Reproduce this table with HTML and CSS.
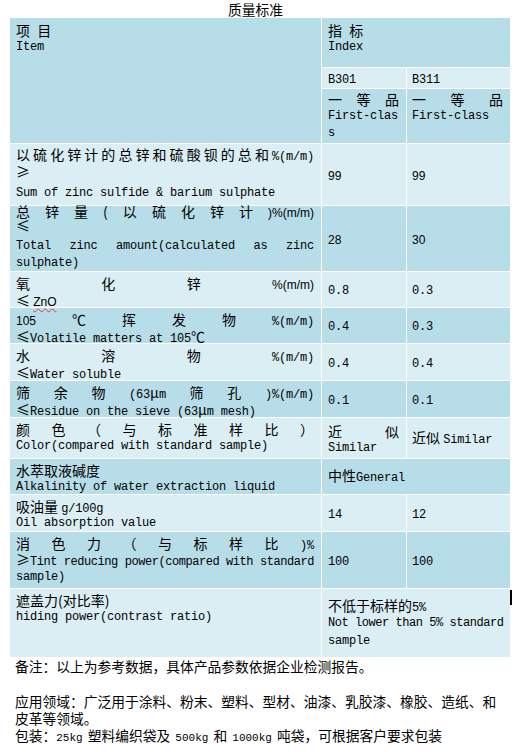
FILE: index.html
```html
<!DOCTYPE html>
<html lang="zh-CN">
<head>
<meta charset="utf-8">
<title>质量标准</title>
<link rel="stylesheet" href="styles.css">
</head>
<body>
<div class="page">
  <div class="title">质量标准</div>
  <table class="spec">
    <colgroup><col class="c1"><col class="c2"><col class="c3"></colgroup>
    <tr class="hA">
      <td rowspan="3" class="dk txt2"><div class="l wide">项 目</div><div class="l e">Item</div></td>
      <td colspan="2" class="dk txt2"><div class="l wide">指 标</div><div class="l e">Index</div></td>
    </tr>
    <tr class="hB">
      <td class="lt txt2"><div class="l e">B301</div></td>
      <td class="lt txt2 k3"><div class="l e">B311</div></td>
    </tr>
    <tr class="hC">
      <td class="dk top0"><div class="l j">一等品</div><div class="l e">First-clas</div><div class="l e">s</div></td>
      <td class="dk top0 k3"><div class="l j">一等品</div><div class="l e">First-class</div></td>
    </tr>

    <tr class="r1">
      <td class="lt top0"><div class="l j">以硫化锌计的总锌和硫酸钡的总和<span class="e">%(m/m)</span></div><div class="l">≥</div><div class="l e gap5">Sum of zinc sulfide &amp; barium sulphate</div></td>
      <td class="lt v"><span class="s">99</span></td>
      <td class="lt v k3"><span class="s">99</span></td>
    </tr>
    <tr class="r2">
      <td class="dk top0"><div class="l j t11">总锌量(以硫化锌计<span class="s">)%(m/m)</span></div><div class="l t17">≤</div><div class="l e j gap2">Total zinc amount(calculated as zinc</div><div class="l e">sulphate)</div></td>
      <td class="dk v"><span class="s">28</span></td>
      <td class="dk v k3"><span class="s">30</span></td>
    </tr>
    <tr class="r3">
      <td class="lt txt"><div class="l j">氧化锌<span class="s">%(m/m)</span></div><div class="l">≤ <span class="s zno">ZnO</span></div></td>
      <td class="lt v"><span class="e">0.8</span></td>
      <td class="lt v k3"><span class="e">0.3</span></td>
    </tr>
    <tr class="r4">
      <td class="dk txt"><div class="l j"><span class="s">105</span>℃挥发物<span class="e">%(m/m)</span></div><div class="l e"><span class="z">≤</span>Volatile matters at 105<span class="z">℃</span></div></td>
      <td class="dk v"><span class="e">0.4</span></td>
      <td class="dk v k3"><span class="e">0.3</span></td>
    </tr>
    <tr class="r5">
      <td class="lt txt"><div class="l j">水溶物<span class="e">%(m/m)</span></div><div class="l e"><span class="z">≤</span>Water soluble</div></td>
      <td class="lt v"><span class="e">0.4</span></td>
      <td class="lt v k3"><span class="e">0.4</span></td>
    </tr>
    <tr class="r6">
      <td class="dk txt"><div class="l j">筛余物<span class="e">(63</span>μ<span class="e">m</span>筛孔<span class="e">)%(m/m)</span></div><div class="l e"><span class="z">≤</span>Residue on the sieve (63<span class="z">μ</span>m mesh)</div></td>
      <td class="dk v"><span class="e">0.1</span></td>
      <td class="dk v k3"><span class="e">0.1</span></td>
    </tr>
    <tr class="r7">
      <td class="lt txt"><div class="l j">颜色（与标准样比）</div><div class="l e">Color(compared with standard sample)</div></td>
      <td class="lt v"><div class="l j">近似</div><div class="l e">Similar</div></td>
      <td class="lt v k3">近似 <span class="e">Similar</span></td>
    </tr>
    <tr class="r8">
      <td class="dk txt"><div class="l">水萃取液碱度</div><div class="l e">Alkalinity of water extraction liquid</div></td>
      <td colspan="2" class="dk v">中性<span class="e">General</span></td>
    </tr>
    <tr class="r9">
      <td class="lt txt"><div class="l">吸油量 <span class="e">g/100g</span></div><div class="l e">Oil absorption value</div></td>
      <td class="lt v"><span class="e">14</span></td>
      <td class="lt v k3"><span class="e">12</span></td>
    </tr>
    <tr class="r10">
      <td class="dk txt"><div class="l j">消色力（与标样比<span class="e">)%</span></div><div class="l e j tint l18"><span class="z">≥</span>Tint reducing power(compared with standard</div><div class="l e l18">sample)</div></td>
      <td class="dk v"><span class="e">100</span></td>
      <td class="dk v k3"><span class="e">100</span></td>
    </tr>
    <tr class="r11">
      <td class="lt txt"><div class="l">遮盖力(对比率)</div><div class="l e">hiding power(contrast ratio)</div></td>
      <td colspan="2" class="lt v"><div class="l l18">不低于标样的<span class="e">5%</span></div><div class="l e nl l18">Not lower than 5% standard</div><div class="l e l18">sample</div></td>
    </tr>
  </table>
  <span class="caret"></span>
  <div class="notes">
    <p class="n1">备注：以上为参考数据，具体产品参数依据企业检测报告。</p>
    <p class="n2">应用领域：广泛用于涂料、粉末、塑料、型材、油漆、乳胶漆、橡胶、造纸、和皮革等领域。</p>
    <p class="n3">包装：<span class="e sm">25kg</span> 塑料编织袋及 <span class="e sm">500kg</span> 和 <span class="e sm">1000kg</span> 吨袋，可根据客户要求包装</p>
  </div>
</div>
</body>
</html>
```
FILE: styles.css
```css
* { box-sizing: border-box; }
html, body { margin: 0; padding: 0; background: #fff; }
body {
  font-family: "Noto Sans CJK SC", sans-serif;
  font-size: 14px;
  color: #000;
}
.page { position: relative; width: 515px; height: 752px; overflow: hidden; }

.title {
  height: 17px;
  line-height: 18px;
  text-align: center;
  padding-right: 4px;
  font-size: 13.75px;
}

.spec {
  border-collapse: separate;
  border-spacing: 1px;
  margin-left: 9px;
  width: 502px;
  table-layout: fixed;
  background: #fff;
}
.c1 { width: 311px; }
.c2 { width: 84px; }
.c3 { width: 103px; }

.spec td {
  padding: 0 7px 0 6px;
  vertical-align: top;
}
.spec td.k3 { padding-left: 5px; }
.spec td.txt { padding-top: 1px; }
.spec td.txt2 { padding-top: 2px; }
.spec td.top0 { padding-top: 0; }
.spec td.v { vertical-align: middle; line-height: 18px; }

.dk { background: #b7dde8; }
.lt { background: #daeef3; }

.hA { height: 49px; }
.hB { height: 20px; }
.hC { height: 54px; }
.r1 { height: 61px; }
.r2 { height: 65px; }
.r3 { height: 35px; }
.r4 { height: 35px; }
.r5 { height: 36px; }
.r6 { height: 36px; }
.r7 { height: 40px; }
.r8 { height: 35px; }
.r9 { height: 36px; }
.r10 { height: 56px; }
.r11 { height: 68px; }

.l {
  display: block;
  height: 17px;
  line-height: 20px;
  white-space: nowrap;
}
.l18 { height: 18px; line-height: 18px; }
.j {
  white-space: normal;
  text-align: justify;
  text-align-last: justify;
}
.wide { word-spacing: 4px; }
.gap5 { margin-top: 5px; }
.gap2 { margin-top: 2px; }
.t11 { height: 11px; line-height: 11px; }
.t17 { height: 17px; line-height: 17px; }

.e {
  font-family: "Liberation Mono", "Noto Sans CJK SC", monospace;
  font-size: 12px;
  letter-spacing: -0.2px;
}
.s {
  font-family: "Liberation Sans", Arial, sans-serif;
  font-size: 12px;
}
.z {
  font-family: "Noto Sans CJK SC", sans-serif;
  font-size: 14px;
  letter-spacing: 0;
}
.tint { letter-spacing: -0.45px; }
.nl { letter-spacing: -0.45px; }

.zno {
  text-decoration: underline wavy #e0393e;
  text-decoration-thickness: 1px;
  text-underline-offset: 2px;
}

.caret {
  position: absolute;
  left: 510px;
  top: 590px;
  width: 2px;
  height: 15px;
  background: #000;
}

.notes {
  padding: 0 8px 0 15px;
  font-size: 13.75px;
}
.notes p { margin: 0; }
.n1 { line-height: 16px; }
.notes .n2 { margin-top: 19px; line-height: 17px; }
.n3 { line-height: 16px; word-spacing: 2px; }
.sm { font-size: 11px; letter-spacing: 0; }
```
